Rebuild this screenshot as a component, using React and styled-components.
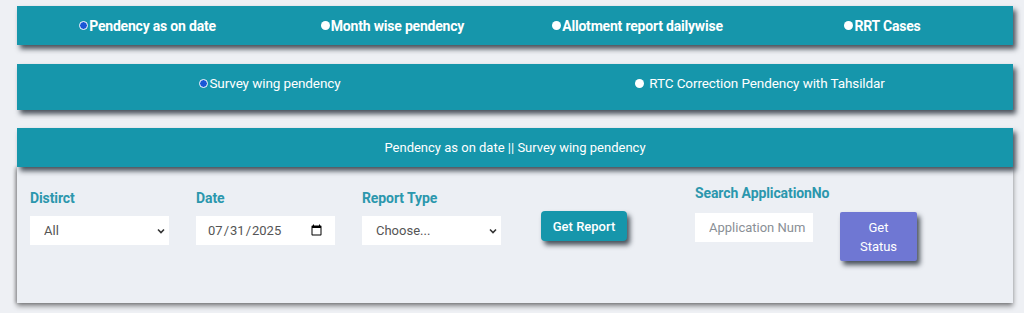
import React from "react";
import styled, { createGlobalStyle } from "styled-components";

const Global = createGlobalStyle`
  html, body { margin: 0; padding: 0; background: #eef0f4; }
  body { font-family: Roboto, "Noto Sans", Arial, sans-serif; }
  * { box-sizing: border-box; }
`;

const Page = styled.div`
  width: 1024px;
  height: 313px;
  padding: 6px 0 0 17px;
  overflow: hidden;
`;

const Wrap = styled.div`
  width: 996px;
  display: flex;
  flex-direction: column;
`;

const Bar = styled.div`
  background: #1696ab;
  height: ${(p) => p.$h}px;
  margin-bottom: ${(p) => p.$mb}px;
  padding: 0 8px ${(p) => p.$pb || 0}px;
  display: grid;
  grid-template-columns: repeat(${(p) => p.$cols}, 1fr);
  align-items: center;
  box-shadow: 3px 4px 5px rgba(20, 30, 40, 0.75);
  position: relative;
`;

const Item = styled.label`
  display: flex;
  align-items: center;
  justify-content: center;
  color: #fff;
  font-size: ${(p) => (p.$bold ? 14 : 13.5)}px;
  font-weight: ${(p) => (p.$bold ? 700 : 400)};
  gap: ${(p) => p.$gap}px;
  letter-spacing: ${(p) => (p.$bold ? "-0.2px" : "-0.1px")};
`;

const Dot = styled.span`
  width: 9px;
  height: 9px;
  border-radius: 50%;
  background: ${(p) => (p.$on ? "#1a56d6" : "#ffffff")};
  border: ${(p) => (p.$on ? "1.5px solid #fff" : "none")};
  display: inline-block;
  flex: none;
`;

const Title = styled.div`
  grid-column: 1 / -1;
  text-align: center;
  color: #fff;
  font-size: 13px;
`;

const Panel = styled.div`
  background: #eceff4;
  height: 136px;
  padding: 22px 0 0 13px;
  display: flex;
  align-items: flex-start;
  box-shadow: 0 3px 5px rgba(0, 0, 0, 0.45), -2px 0 3px rgba(0, 0, 0, 0.2);
`;

const Field = styled.div`
  display: flex;
  flex-direction: column;
  width: ${(p) => p.$w || 139}px;
  margin-right: ${(p) => p.$mr}px;
  margin-top: ${(p) => p.$mt || 0}px;
`;

const Label = styled.div`
  color: #2b97ad;
  font-weight: 700;
  font-size: 14px;
  height: 18px;
  line-height: 18px;
  margin-bottom: ${(p) => p.$mb}px;
  white-space: nowrap;
  letter-spacing: -0.1px;
`;

const Select = styled.select`
  appearance: none;
  -webkit-appearance: none;
  width: 139px;
  height: 29px;
  border: none;
  outline: none;
  background: #fff
    url("data:image/svg+xml;utf8,<svg xmlns='http://www.w3.org/2000/svg' width='10' height='10' viewBox='0 0 10 10'><path d='M2 3.5 L5 6.5 L8 3.5' stroke='%23333' stroke-width='1.6' fill='none'/></svg>")
    no-repeat right 3px center;
  padding: 0 0 0 14px;
  font-family: inherit;
  font-size: 13px;
  color: #555;
`;

const DateInput = styled.input`
  width: 139px;
  height: 29px;
  border: none;
  outline: none;
  background: #fff;
  padding: 0 10px 0 11px;
  font-family: inherit;
  font-size: 13px;
  color: #555;
`;

const TextInput = styled.input`
  width: 118px;
  height: 29px;
  border: none;
  outline: none;
  background: #fff;
  padding: 0 0 0 14px;
  font-family: inherit;
  font-size: 13px;
  color: #555;
  &::placeholder { color: #8a8f96; }
`;

const Button = styled.button`
  border: none;
  color: #fff;
  font-family: inherit;
  font-size: 13px;
  font-weight: ${(p) => p.$fw || 400};
  background: ${(p) => p.$bg};
  width: ${(p) => p.$w}px;
  height: ${(p) => p.$h}px;
  margin-top: ${(p) => p.$mt}px;
  margin-right: ${(p) => p.$mr || 0}px;
  border-radius: ${(p) => p.$r}px;
  line-height: 19px;
  padding: 0 6px;
  box-shadow: 3px 4px 5px rgba(20, 30, 40, 0.75);
`;

export default function App() {
  return (
    <>
      <Global />
      <Page>
        <Wrap>
          <Bar $h={39} $mb={19} $cols={4}>
            <Item $bold $gap={1}><Dot $on />Pendency as on date</Item>
            <Item $bold $gap={1}><Dot />Month wise pendency</Item>
            <Item $bold $gap={1}><Dot />Allotment report dailywise</Item>
            <Item $bold $gap={1}><Dot />RRT Cases</Item>
          </Bar>
          <Bar $h={46} $mb={18} $pb={8} $cols={2}>
            <Item $gap={1}><Dot $on />Survey wing pendency</Item>
            <Item $gap={5}><Dot />RTC Correction Pendency with Tahsildar</Item>
          </Bar>
          <Bar $h={39} $mb={0} $cols={1}>
            <Title>Pendency as on date || Survey wing pendency</Title>
          </Bar>
          <Panel>
            <Field $mr={27}>
              <Label $mb={9}>Distirct</Label>
              <Select defaultValue="all">
                <option value="all">All</option>
              </Select>
            </Field>
            <Field $mr={27}>
              <Label $mb={9}>Date</Label>
              <DateInput type="date" defaultValue="2025-07-31" />
            </Field>
            <Field $mr={40}>
              <Label $mb={9}>Report Type</Label>
              <Select defaultValue="">
                <option value="">Choose...</option>
              </Select>
            </Field>
            <Button $bg="#1696ab" $fw={500} $w={86} $h={30} $mt={22} $mr={68} $r={4}>
              Get Report
            </Button>
            <Field $w={118} $mr={27} $mt={-5}>
              <Label $mb={11}>Search ApplicationNo</Label>
              <TextInput placeholder="Application Num" />
            </Field>
            <Button $bg="#6f77d3" $w={77} $h={49} $mt={23} $r={2}>
              Get<br />Status
            </Button>
          </Panel>
        </Wrap>
      </Page>
    </>
  );
}
